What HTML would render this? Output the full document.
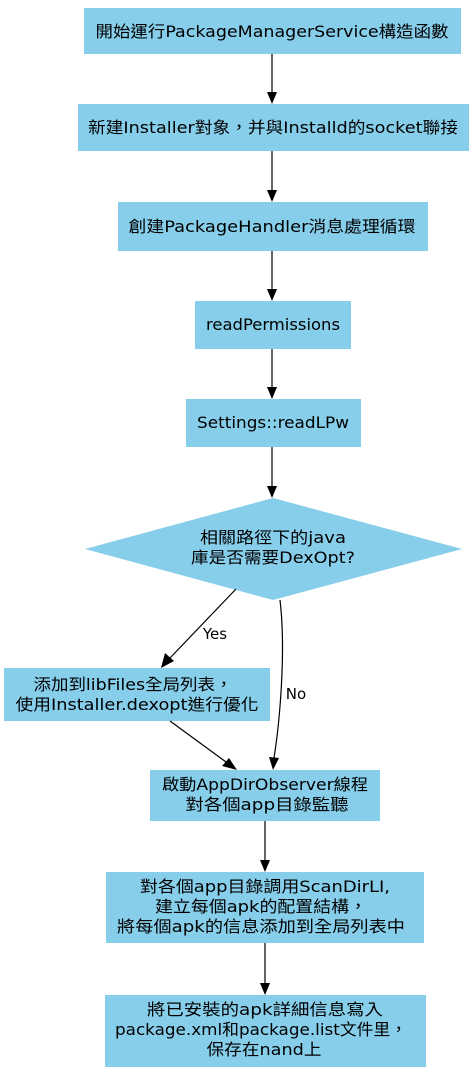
<!DOCTYPE html>
<html><head><meta charset="utf-8"><style>
html,body{margin:0;padding:0;background:#fff;}
svg{display:block}
text{font-family:"DejaVu Sans","Liberation Sans","Noto Sans CJK TC",sans-serif;font-size:16px;fill:#000;text-anchor:middle}
text.l{font-size:15px}
.b{fill:#87ceeb}
.e{stroke:#000;stroke-width:1.2;fill:none}
.a{fill:#000}
</style></head><body>
<svg width="475" height="1072" viewBox="0 0 475 1072">
<rect class="b" x="84" y="8" width="377" height="46"/>
<text x="272" y="37" textLength="353" lengthAdjust="spacingAndGlyphs">開始運行PackageManagerService構造函數</text>
<line class="e" x1="272" y1="54" x2="272" y2="92"/><polygon class="a" points="267,92 277,92 272,104"/>
<rect class="b" x="78" y="104" width="391" height="47"/>
<text x="273" y="133" textLength="370" lengthAdjust="spacingAndGlyphs">新建Installer對象，并與Installd的socket聯接</text>
<line class="e" x1="272" y1="151" x2="272" y2="190"/><polygon class="a" points="267,190 277,190 272,202"/>
<rect class="b" x="118" y="202" width="310" height="49"/>
<text x="272" y="232" textLength="287" lengthAdjust="spacingAndGlyphs">創建PackageHandler消息處理循環</text>
<line class="e" x1="272" y1="251" x2="272" y2="289"/><polygon class="a" points="267,289 277,289 272,301"/>
<rect class="b" x="195" y="301" width="156" height="48"/>
<text x="273" y="330" textLength="134" lengthAdjust="spacingAndGlyphs">readPermissions</text>
<line class="e" x1="272" y1="349" x2="272" y2="387"/><polygon class="a" points="267,387 277,387 272,399"/>
<rect class="b" x="186" y="399" width="175" height="48"/>
<text x="273" y="428" textLength="152" lengthAdjust="spacingAndGlyphs">Settings::readLPw</text>
<line class="e" x1="272" y1="447" x2="272" y2="486"/><polygon class="a" points="267,486 277,486 272,498"/>
<polygon class="b" points="273,498 462,549 273,600 85,549"/>
<text x="273" y="543" textLength="146" lengthAdjust="spacingAndGlyphs">相關路徑下的java</text>
<text x="273" y="563" textLength="164" lengthAdjust="spacingAndGlyphs">庫是否需要DexOpt?</text>
<line class="e" x1="236" y1="589" x2="170" y2="658"/><polygon class="a" points="165,653 174,661 161,668"/>
<text class="l" x="215" y="639">Yes</text>
<path class="e" d="M280,600 C286,650 280,720 274,758"/><polygon class="a" points="269,757 279,758 273,770"/>
<text class="l" x="296" y="699">No</text>
<rect class="b" x="4" y="668" width="266" height="53"/>
<text x="133" y="690" textLength="199" lengthAdjust="spacingAndGlyphs">添加到libFiles全局列表，</text>
<text x="137" y="710" textLength="243" lengthAdjust="spacingAndGlyphs">使用Installer.dexopt進行優化</text>
<line class="e" x1="170" y1="721" x2="226" y2="762"/><polygon class="a" points="222,766 229,758 237,770"/>
<rect class="b" x="150" y="770" width="230" height="51"/>
<text x="265" y="790" textLength="206" lengthAdjust="spacingAndGlyphs">啟動AppDirObserver線程</text>
<text x="267" y="810" textLength="163" lengthAdjust="spacingAndGlyphs">對各個app目錄監聽</text>
<line class="e" x1="265" y1="821" x2="265" y2="860"/><polygon class="a" points="260,860 270,860 265,872"/>
<rect class="b" x="106" y="872" width="318" height="71"/>
<text x="265" y="892" textLength="250" lengthAdjust="spacingAndGlyphs">對各個app目錄調用ScanDirLI,</text>
<text x="261" y="912" textLength="212" lengthAdjust="spacingAndGlyphs">建立每個apk的配置結構，</text>
<text x="261" y="932" textLength="288" lengthAdjust="spacingAndGlyphs">將每個apk的信息添加到全局列表中</text>
<line class="e" x1="265" y1="943" x2="265" y2="983"/><polygon class="a" points="260,983 270,983 265,995"/>
<rect class="b" x="105" y="995" width="321" height="72"/>
<text x="265" y="1015" textLength="236" lengthAdjust="spacingAndGlyphs">將已安裝的apk詳細信息寫入</text>
<text x="261" y="1035" textLength="292" lengthAdjust="spacingAndGlyphs">package.xml和package.list文件里，</text>
<text x="264" y="1055" textLength="115" lengthAdjust="spacingAndGlyphs">保存在nand上</text>
</svg>
</body></html>
